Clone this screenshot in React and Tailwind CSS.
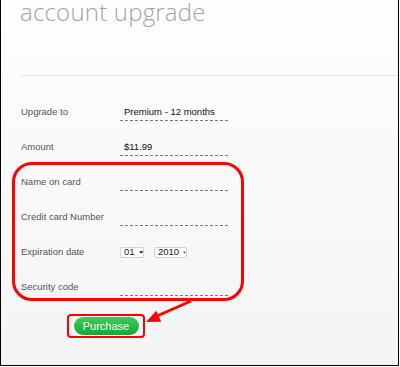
export default function App() {
  const font = { fontFamily: '"Liberation Sans", Arial, sans-serif' };
  const Caret = () => (
    <svg width="5" height="3" viewBox="0 0 5 3" className="ml-[4px]">
      <path d="M0 0 L5 0 L2.5 3 Z" fill="#222" />
    </svg>
  );
  const rows = [
    { label: "Upgrade to", value: "Premium - 12 months" },
    { label: "Amount", value: "$11.99" },
    { label: "Name on card", value: "" },
    { label: "Credit card Number", value: "" },
    { label: "Expiration date", select: true },
    { label: "Security code", value: "" },
  ];
  return (
    <div
      className="relative w-[399px] h-[366px] border-l border-r border-b border-black bg-gradient-to-b from-[#fefefe] via-[#f9f9f9] to-[#f4f4f4] overflow-hidden"
      style={font}
    >
      <div className="pl-[19px] h-[75px]">
        <div
          className="text-[24px] leading-[24px] font-light text-[#a3a3a3] tracking-[0.2px]"
          style={{ fontFamily: '"Open Sans", "Noto Sans", sans-serif' }}
        >
          account upgrade
        </div>
      </div>
      <div className="ml-[20px] border-t border-[#e6e6e6]" />
      <div className="pt-[27px] pl-[20px] flex flex-col gap-[17px]">
        {rows.map((r) => (
          <div key={r.label} className="flex items-center h-[18px]">
            <div className="w-[99px] text-[9.5px] text-[#555] leading-none">{r.label}</div>
            {r.select ? (
              <div className="flex items-center gap-[10px] h-[18px]">
                <div className="flex items-center h-[11px] w-[24px] pl-[3px] bg-white border border-[#d2d2d2] rounded-[2px] text-[9.5px] leading-none text-[#222]">
                  01
                  <Caret />
                </div>
                <div className="flex items-center h-[11px] w-[33px] pl-[3px] bg-white border border-[#d2d2d2] rounded-[2px] text-[9.5px] leading-none text-[#222]">
                  2010
                  <Caret />
                </div>
              </div>
            ) : (
              <div className="w-[108px] h-[18px] border-b border-dashed border-[#7a7a7a] flex items-center pl-[4px] text-[9.5px] text-[#111] leading-none">
                {r.value}
              </div>
            )}
          </div>
        ))}
      </div>
      <div className="mt-[18px] ml-[66px] w-[78px] h-[24px] border-2 border-[#ff0000] rounded-[4px] flex items-center justify-center">
        <button className="w-[65px] h-[18px] rounded-full bg-gradient-to-b from-[#3bcf57] to-[#12a83a] text-[#f4fff4] text-[11px] leading-none flex items-center justify-center">
          Purchase
        </button>
      </div>
      {/* annotation overlays */}
      <div className="absolute left-[11px] top-[162px] w-[232px] h-[139px] border-[3px] border-[#ff0000] rounded-[20px] pointer-events-none" />
      <svg className="absolute left-0 top-0 pointer-events-none" width="399" height="366">
        <line x1="190" y1="301" x2="156" y2="316" stroke="#ff0000" strokeWidth="3" />
        <polygon points="145,322 155.4,310.8 160.2,321.8" fill="#ff0000" />
      </svg>
    </div>
  );
}
